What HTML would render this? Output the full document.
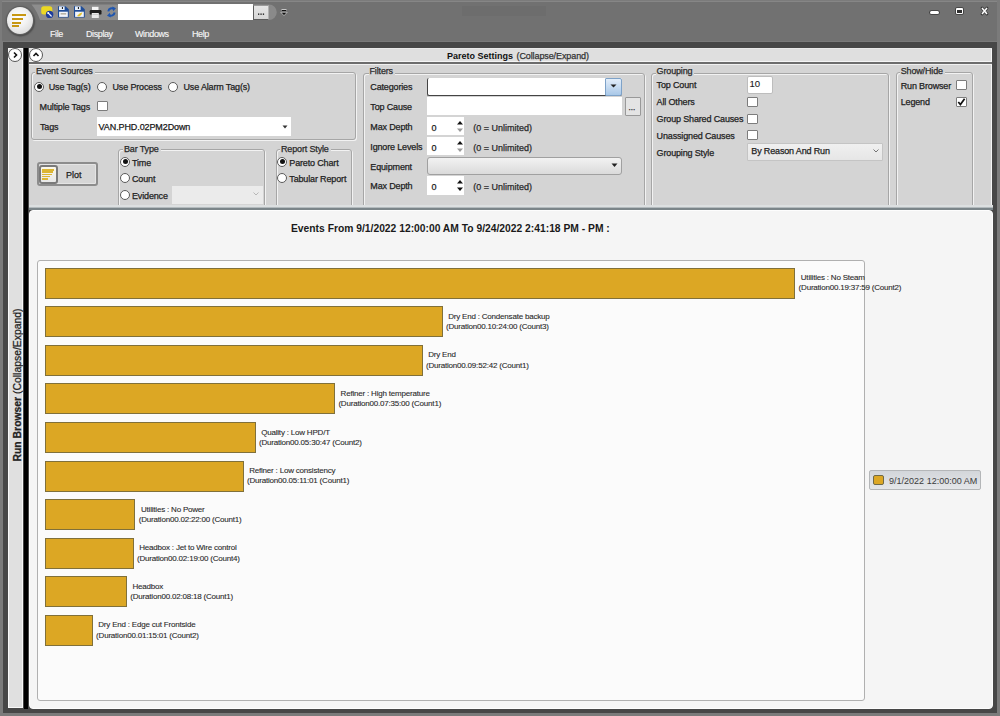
<!DOCTYPE html>
<html><head><meta charset="utf-8"><style>
html,body{margin:0;padding:0;width:1000px;height:716px;overflow:hidden;background:#7b7b7b}
body{position:relative;font-family:"Liberation Sans", sans-serif}
body>div,body>svg{position:absolute}
.t{white-space:nowrap;-webkit-text-stroke:0.25px currentColor}
</style></head><body>
<div style="left:0px;top:0px;width:1000px;height:716px;background:#7b7b7b"></div>
<div style="left:2px;top:1px;width:995px;height:41px;background:#717171;box-shadow:inset 0 1px 0 #868686, inset 0 -1px 0 #7a7a7a"></div>
<div style="left:462px;top:6px;width:84px;height:10px;background:#6d6d6d"></div>
<div style="left:3px;top:42px;width:994px;height:671px;background:#474747"></div>
<div style="left:7px;top:7px;width:26px;height:27px;border-radius:50%;background:radial-gradient(circle at 45% 40%,#ffffff 0%,#f2f2f2 40%,#d0d0d0 100%);box-shadow:0 0 0 1px #606060, 0.5px 1px 1.5px 1.5px #4c4c4c"></div>
<div style="left:12px;top:13.8px;width:14px;height:2.1px;background:#c79712"></div>
<div style="left:12px;top:17.8px;width:11px;height:2.1px;background:#c79712"></div>
<div style="left:12px;top:21.5px;width:9.2px;height:2.1px;background:#c79712"></div>
<div style="left:12px;top:25.4px;width:7px;height:2.1px;background:#c79712"></div>
<svg style="left:0px;top:0px" width="300" height="30"><path d="M31.5 4.5 L262 4.5 L262 20 L40 20 Q37 11 31.5 4.5 Z" fill="#8d8d8d"/><path d="M262 4.5 L269 4.5 A7.75 7.75 0 0 1 269 20 L262 20 Z" fill="#8a8a8a"/></svg>
<div style="left:118px;top:4px;width:135px;height:16px;background:#fff"></div>
<div style="left:253px;top:4.5px;width:16px;height:15.5px;background:linear-gradient(#e6e6e6,#d6d6d6);box-sizing:border-box;border:1px solid #5c5c5c;border-top-color:#9a9a9a;border-right-color:#b0b0b0"></div>
<svg style="left:258px;top:13px" width="7" height="3"><rect x="0" y="0.5" width="1.3" height="1.3" fill="#111"/><rect x="2.4" y="0.5" width="1.3" height="1.3" fill="#111"/><rect x="4.8" y="0.5" width="1.3" height="1.3" fill="#111"/></svg>
<svg style="left:280px;top:8px" width="8" height="9"><rect x="1.5" y="1" width="5" height="1.3" fill="#fff" opacity="0.6"/><rect x="2" y="2" width="4" height="1" fill="#111"/><path d="M0.8 4.3 L7.2 4.3 L4 7.6 Z" fill="#111" stroke="#eee" stroke-width="0.6"/></svg>
<svg style="left:0px;top:0px" width="130" height="25" viewBox="0 0 130 25">
<rect x="41.2" y="6.2" width="11.1" height="8.2" rx="2.5" fill="#ecd823"/>
<circle cx="49.6" cy="14.4" r="3.7" fill="#1e3d9c"/>
<path d="M48.3 13.1 L51.2 16" stroke="#e8f0ff" stroke-width="1.3" stroke-linecap="round"/><circle cx="48.2" cy="13" r="1" fill="#fff"/>
<g id="fl">
<path d="M58 6.2 L65.5 6.2 L68.8 9.3 L68.8 17.6 L58 17.6 Z" fill="#1f4d98"/>
<rect x="59" y="6.4" width="5.6" height="3.6" fill="#e6eef8"/>
<rect x="61.9" y="7" width="1" height="2" fill="#111"/>
<rect x="59.1" y="11.7" width="8.7" height="5.2" fill="#f2f5fa"/>
<rect x="60.6" y="13" width="5.6" height="1.6" fill="#b9b5a8"/>
</g>
<path d="M74 6.2 L81.5 6.2 L84.8 9.3 L84.8 17.6 L74 17.6 Z" fill="#1f4d98"/>
<rect x="75" y="6.4" width="5.6" height="3.6" fill="#e6eef8"/>
<rect x="77.9" y="7" width="1" height="2" fill="#111"/>
<rect x="75.1" y="11.7" width="8.7" height="5.2" fill="#f2f5fa"/>
<path d="M77 16 L79.5 13.5 L82.5 12.2 L81.2 15 L79 16.5 Z" fill="#e2c22c"/>
<rect x="92" y="6.8" width="6.5" height="3.6" fill="#f4f4f4"/>
<rect x="89.7" y="10" width="11.8" height="4.6" rx="1.2" fill="#1e1e1e"/>
<rect x="91.8" y="13" width="7" height="5" fill="#e9e9e9"/>
<rect x="92.5" y="14.2" width="5.6" height="0.6" fill="#bbb"/>
<path d="M108.3 11.3 A3.6 3.6 0 0 1 114 9" fill="none" stroke="#1f56b0" stroke-width="2"/>
<path d="M112.3 6.6 L116 8.2 L113.2 11.2 Z" fill="#1f56b0"/>
<path d="M114.6 12.5 A3.6 3.6 0 0 1 109 15" fill="none" stroke="#1f56b0" stroke-width="2"/>
<path d="M110.8 17.6 L107 15.8 L109.8 12.8 Z" fill="#1f56b0"/>
</svg>
<div style="left:930px;top:10.5px;width:8.5px;height:3px;background:#fff;box-shadow:0 0 0 0.8px #3a3a3a;border-radius:1.5px"></div>
<div style="left:956px;top:7.8px;width:7px;height:6.6px;background:#2e2e2e;box-sizing:border-box;border:1.4px solid #fff;border-top-width:2.4px;box-shadow:0 0 0 0.8px #3a3a3a;border-radius:1px"></div>
<svg style="left:980px;top:6px" width="9" height="10"><path d="M2 2 L7 8 M7 2 L2 8" stroke="#3a3a3a" stroke-width="2.8" stroke-linecap="round"/><path d="M2 2 L7 8 M7 2 L2 8" stroke="#fff" stroke-width="1.5"/></svg>
<div class="t" style="left:50px;top:30px;font-size:9px;line-height:9px;font-weight:normal;color:#f6f6f6;letter-spacing:-0.4px;-webkit-text-stroke:0.15px #f2f2f2">File</div>
<div class="t" style="left:86px;top:30px;font-size:9px;line-height:9px;font-weight:normal;color:#f6f6f6;letter-spacing:-0.4px;-webkit-text-stroke:0.15px #f2f2f2">Display</div>
<div class="t" style="left:135px;top:30px;font-size:9px;line-height:9px;font-weight:normal;color:#f6f6f6;letter-spacing:-0.4px;-webkit-text-stroke:0.15px #f2f2f2">Windows</div>
<div class="t" style="left:192px;top:30px;font-size:9px;line-height:9px;font-weight:normal;color:#f6f6f6;letter-spacing:-0.4px;-webkit-text-stroke:0.15px #f2f2f2">Help</div>
<div style="left:8px;top:48px;width:15px;height:660px;background:#e0e0e0;box-shadow:inset 0 0 0 1px #f8f8f8"></div>
<div style="left:24px;top:48px;width:4px;height:661px;background:#000"></div>
<div style="left:8px;top:48px;width:14px;height:14px;border-radius:50%;background:#fff;box-sizing:border-box;border:1px solid #555"></div>
<svg style="left:8px;top:48px" width="14" height="14"><path d="M6 4.5 L8.5 7 L6 9.5" fill="none" stroke="#111" stroke-width="1.6"/></svg>
<div class="t" style="left:-58.5px;top:380px;width:151px;height:12px;transform:rotate(-90deg);transform-origin:center;font-size:10.4px;line-height:12px;color:#222;white-space:nowrap;text-align:left"><b>Run Browser</b> (Collapse/Expand)</div>
<div style="left:29px;top:48px;width:963px;height:14px;background:#dfdfdf;box-shadow:inset 0 1px 0 #e9e9e9, inset 0 -1px 0 #f4f4f4, inset -1px 0 0 #f8f8f8"></div>
<div style="left:29px;top:62.3px;width:963px;height:1.7px;background:#6c6c6c"></div>
<div style="left:29px;top:48px;width:14px;height:14px;border-radius:50%;background:#fff;box-sizing:border-box;border:1px solid #555"></div>
<svg style="left:29px;top:48px" width="14" height="14"><path d="M4.5 8 L7 5.5 L9.5 8" fill="none" stroke="#111" stroke-width="1.6"/></svg>
<div class="t" style="left:447px;top:52px;font-size:9px;line-height:9px;font-weight:bold;color:#111;letter-spacing:0px;-webkit-text-stroke:0">Pareto Settings</div>
<div class="t" style="left:516.5px;top:52px;font-size:9px;line-height:9px;font-weight:normal;color:#333;letter-spacing:-0.1px;">(Collapse/Expand)</div>
<div style="left:29px;top:64px;width:963px;height:144px;background:#d4d4d4;box-shadow:inset 0 1px 0 #f0f0f0, inset -1px 0 0 #f4f4f4"></div>
<div style="left:31px;top:71.5px;width:325px;height:68px;box-sizing:border-box;border:1px solid #a6a6a6;border-radius:3px;box-shadow:inset 1px 1px 0 #f2f2f2, 1px 1px 0 #f2f2f2"></div>
<div class="t" style="left:35px;top:67.2px;font-size:9px;line-height:9px;font-weight:normal;color:#2a2a2a;letter-spacing:-0.15px;"><span style="background:#d4d4d4;padding:0 2px 0 1px">Event Sources</span></div>
<div style="left:118px;top:148.5px;width:147px;height:59.5px;box-sizing:border-box;border:1px solid #a6a6a6;border-radius:3px;box-shadow:inset 1px 1px 0 #f2f2f2, 1px 1px 0 #f2f2f2"></div>
<div class="t" style="left:123px;top:144.5px;font-size:9px;line-height:9px;font-weight:normal;color:#2a2a2a;letter-spacing:-0.15px;"><span style="background:#d4d4d4;padding:0 2px 0 1px">Bar Type</span></div>
<div style="left:276px;top:149px;width:76px;height:59px;box-sizing:border-box;border:1px solid #a6a6a6;border-radius:3px;box-shadow:inset 1px 1px 0 #f2f2f2, 1px 1px 0 #f2f2f2"></div>
<div class="t" style="left:280px;top:144.5px;font-size:9px;line-height:9px;font-weight:normal;color:#2a2a2a;letter-spacing:-0.15px;"><span style="background:#d4d4d4;padding:0 2px 0 1px">Report Style</span></div>
<div style="left:362.5px;top:72.5px;width:282px;height:135px;box-sizing:border-box;border:1px solid #a6a6a6;border-radius:3px;box-shadow:inset 1px 1px 0 #f2f2f2, 1px 1px 0 #f2f2f2"></div>
<div class="t" style="left:368.5px;top:67.2px;font-size:9px;line-height:9px;font-weight:normal;color:#2a2a2a;letter-spacing:-0.15px;"><span style="background:#d4d4d4;padding:0 2px 0 1px">Filters</span></div>
<div style="left:651px;top:72.5px;width:238px;height:135px;box-sizing:border-box;border:1px solid #a6a6a6;border-radius:3px;box-shadow:inset 1px 1px 0 #f2f2f2, 1px 1px 0 #f2f2f2"></div>
<div class="t" style="left:655.6px;top:67.2px;font-size:9px;line-height:9px;font-weight:normal;color:#2a2a2a;letter-spacing:-0.15px;"><span style="background:#d4d4d4;padding:0 2px 0 1px">Grouping</span></div>
<div style="left:896px;top:72px;width:77px;height:135.5px;box-sizing:border-box;border:1px solid #a6a6a6;border-radius:3px;box-shadow:inset 1px 1px 0 #f2f2f2, 1px 1px 0 #f2f2f2"></div>
<div class="t" style="left:899.7px;top:67.2px;font-size:9px;line-height:9px;font-weight:normal;color:#2a2a2a;letter-spacing:-0.15px;"><span style="background:#d4d4d4;padding:0 2px 0 1px">Show/Hide</span></div>
<div style="left:34px;top:81.5px;width:10px;height:10px;border-radius:50%;background:#fff;box-sizing:border-box;border:1px solid #5a5a5a"></div>
<div style="left:36.5px;top:84px;width:5px;height:5px;border-radius:50%;background:#111"></div>
<div class="t" style="left:48.7px;top:83.2px;font-size:9px;line-height:9px;font-weight:normal;color:#222;letter-spacing:-0.15px;">Use Tag(s)</div>
<div style="left:97px;top:81.5px;width:10px;height:10px;border-radius:50%;background:#fff;box-sizing:border-box;border:1px solid #5a5a5a"></div>
<div class="t" style="left:112.5px;top:83.2px;font-size:9px;line-height:9px;font-weight:normal;color:#222;letter-spacing:-0.15px;">Use Process</div>
<div style="left:168px;top:81.5px;width:10px;height:10px;border-radius:50%;background:#fff;box-sizing:border-box;border:1px solid #5a5a5a"></div>
<div class="t" style="left:183.5px;top:83.2px;font-size:9px;line-height:9px;font-weight:normal;color:#222;letter-spacing:-0.15px;">Use Alarm Tag(s)</div>
<div class="t" style="left:39.6px;top:103px;font-size:9px;line-height:9px;font-weight:normal;color:#222;letter-spacing:-0.15px;">Multiple Tags</div>
<div style="left:97.4px;top:100.8px;width:11px;height:10.5px;background:#fff;box-sizing:border-box;border:1px solid #7c7c7c;border-radius:1px"></div>
<div class="t" style="left:40px;top:123px;font-size:9px;line-height:9px;font-weight:normal;color:#222;letter-spacing:-0.15px;">Tags</div>
<div style="left:97px;top:117px;width:194px;height:18.7px;background:#fff"></div>
<div class="t" style="left:98.6px;top:123px;font-size:9px;line-height:9px;font-weight:normal;color:#1a1a1a;letter-spacing:-0.1px;">VAN.PHD.02PM2Down</div>
<svg style="left:282px;top:125px" width="6" height="4"><path d="M0.5 0.5 L5.5 0.5 L3 3.5 Z" fill="#333"/></svg>
<div style="left:36.5px;top:162px;width:61.5px;height:23.8px;box-sizing:border-box;border:2px solid #8d8d8d;border-radius:3px;background:#d6d6d6;box-shadow:inset 0 0 0 1px #e4e4e4"></div>
<div style="left:39px;top:165px;width:18.5px;height:18.5px;box-sizing:border-box;border:2px solid #7a7a7a;border-radius:3px;background:linear-gradient(#fbf8ea,#e8e8e8)"></div>
<div style="left:41.8px;top:169.0px;width:12px;height:1.6px;background:#dcb634"></div>
<div style="left:41.8px;top:171.3px;width:11px;height:1.6px;background:#dcb634"></div>
<div style="left:41.8px;top:173.6px;width:10px;height:1.6px;background:#dcb634"></div>
<div style="left:41.8px;top:175.9px;width:8.5px;height:1.6px;background:#dcb634"></div>
<div style="left:41.8px;top:178.2px;width:6px;height:1.6px;background:#dcb634"></div>
<div class="t" style="left:66px;top:171px;font-size:9px;line-height:9px;font-weight:normal;color:#222;letter-spacing:0px;">Plot</div>
<div style="left:120px;top:156.7px;width:10px;height:10px;border-radius:50%;background:#fff;box-sizing:border-box;border:1px solid #5a5a5a"></div>
<div style="left:122.5px;top:159.2px;width:5px;height:5px;border-radius:50%;background:#111"></div>
<div class="t" style="left:132px;top:158.6px;font-size:9px;line-height:9px;font-weight:normal;color:#222;letter-spacing:-0.15px;">Time</div>
<div style="left:120px;top:173.4px;width:10px;height:10px;border-radius:50%;background:#fff;box-sizing:border-box;border:1px solid #5a5a5a"></div>
<div class="t" style="left:132px;top:175.3px;font-size:9px;line-height:9px;font-weight:normal;color:#222;letter-spacing:-0.15px;">Count</div>
<div style="left:120px;top:189.9px;width:10px;height:10px;border-radius:50%;background:#fff;box-sizing:border-box;border:1px solid #5a5a5a"></div>
<div class="t" style="left:132px;top:191.8px;font-size:9px;line-height:9px;font-weight:normal;color:#222;letter-spacing:-0.15px;">Evidence</div>
<div style="left:172.2px;top:186px;width:90.6px;height:18px;background:#ebebeb"></div>
<svg style="left:253px;top:192px" width="6" height="4"><path d="M0.5 0.5 L3 3 L5.5 0.5" fill="none" stroke="#aaa" stroke-width="0.8"/></svg>
<div style="left:277px;top:156.8px;width:10px;height:10px;border-radius:50%;background:#fff;box-sizing:border-box;border:1px solid #5a5a5a"></div>
<div style="left:279.5px;top:159.3px;width:5px;height:5px;border-radius:50%;background:#111"></div>
<div class="t" style="left:289.3px;top:158.7px;font-size:9px;line-height:9px;font-weight:normal;color:#222;letter-spacing:-0.15px;">Pareto Chart</div>
<div style="left:277px;top:173.2px;width:10px;height:10px;border-radius:50%;background:#fff;box-sizing:border-box;border:1px solid #5a5a5a"></div>
<div class="t" style="left:289.3px;top:175.1px;font-size:9px;line-height:9px;font-weight:normal;color:#222;letter-spacing:-0.15px;">Tabular Report</div>
<div class="t" style="left:370.3px;top:83px;font-size:9px;line-height:9px;font-weight:normal;color:#222;letter-spacing:-0.15px;">Categories</div>
<div class="t" style="left:370.3px;top:103px;font-size:9px;line-height:9px;font-weight:normal;color:#222;letter-spacing:-0.15px;">Top Cause</div>
<div class="t" style="left:370.3px;top:122.69999999999999px;font-size:9px;line-height:9px;font-weight:normal;color:#222;letter-spacing:-0.15px;">Max Depth</div>
<div class="t" style="left:370.3px;top:142.6px;font-size:9px;line-height:9px;font-weight:normal;color:#222;letter-spacing:-0.15px;">Ignore Levels</div>
<div class="t" style="left:370.3px;top:162.5px;font-size:9px;line-height:9px;font-weight:normal;color:#222;letter-spacing:-0.15px;">Equipment</div>
<div class="t" style="left:370.3px;top:182px;font-size:9px;line-height:9px;font-weight:normal;color:#222;letter-spacing:-0.15px;">Max Depth</div>
<div style="left:427.3px;top:77.8px;width:194.4px;height:17.9px;background:#fff;box-sizing:border-box;border-left:1.5px solid #444;border-bottom:1.5px solid #444;border-radius:2px"></div>
<div style="left:605.4px;top:77.8px;width:16.3px;height:17.9px;background:linear-gradient(#e3eefa,#a9c8e8);box-sizing:border-box;border:1px solid #7ea2c8;border-radius:1px 2px 2px 1px"></div>
<svg style="left:610px;top:84px" width="7" height="4"><path d="M0.5 0.5 L6.5 0.5 L3.5 3.5 Z" fill="#222"/></svg>
<div style="left:427.3px;top:97px;width:194.4px;height:18px;background:#fff"></div>
<div style="left:625.4px;top:97.4px;width:15.3px;height:18.2px;background:#e4e4e4;box-sizing:border-box;border:1px solid #999;border-radius:1px"></div>
<div class="t" style="left:628.5px;top:104px;font-size:8px;line-height:8px;color:#222">...</div>
<div style="left:427.3px;top:116.6px;width:36.5px;height:18.5px;background:#fff"></div>
<div class="t" style="left:431.5px;top:123.6px;font-size:9px;line-height:9px;font-weight:normal;color:#222;letter-spacing:0px;">0</div>
<svg style="left:456px;top:119.6px" width="8" height="13"><path d="M1 4.5 L4 1 L7 4.5 Z" fill="#111"/><path d="M1 8.5 L4 12 L7 8.5 Z" fill="#999"/></svg>
<div class="t" style="left:473.2px;top:123.6px;font-size:9px;line-height:9px;font-weight:normal;color:#2a2a2a;letter-spacing:0px;">(0 = Unlimited)</div>
<div style="left:427.3px;top:136.8px;width:36.5px;height:18.5px;background:#fff"></div>
<div class="t" style="left:431.5px;top:143.8px;font-size:9px;line-height:9px;font-weight:normal;color:#222;letter-spacing:0px;">0</div>
<svg style="left:456px;top:139.8px" width="8" height="13"><path d="M1 4.5 L4 1 L7 4.5 Z" fill="#111"/><path d="M1 8.5 L4 12 L7 8.5 Z" fill="#999"/></svg>
<div class="t" style="left:473.2px;top:143.8px;font-size:9px;line-height:9px;font-weight:normal;color:#2a2a2a;letter-spacing:0px;">(0 = Unlimited)</div>
<div style="left:427.3px;top:156.9px;width:194.4px;height:17.7px;background:linear-gradient(#f2f2f2,#dadada);box-sizing:border-box;border:1px solid #a0a0a0;border-radius:3px"></div>
<svg style="left:611px;top:163px" width="7" height="5"><path d="M0.5 0.5 L6.5 0.5 L3.5 4 Z" fill="#222"/></svg>
<div style="left:427.3px;top:176.3px;width:36.5px;height:18.5px;background:#fff"></div>
<div class="t" style="left:431.5px;top:183.3px;font-size:9px;line-height:9px;font-weight:normal;color:#222;letter-spacing:0px;">0</div>
<svg style="left:456px;top:179.3px" width="8" height="13"><path d="M1 4.5 L4 1 L7 4.5 Z" fill="#111"/><path d="M1 8.5 L4 12 L7 8.5 Z" fill="#111"/></svg>
<div class="t" style="left:473.2px;top:183.3px;font-size:9px;line-height:9px;font-weight:normal;color:#2a2a2a;letter-spacing:0px;">(0 = Unlimited)</div>
<div class="t" style="left:656.6px;top:81.4px;font-size:9px;line-height:9px;font-weight:normal;color:#222;letter-spacing:-0.15px;">Top Count</div>
<div class="t" style="left:656.6px;top:98.4px;font-size:9px;line-height:9px;font-weight:normal;color:#222;letter-spacing:-0.15px;">All Others</div>
<div class="t" style="left:656.6px;top:115.4px;font-size:9px;line-height:9px;font-weight:normal;color:#222;letter-spacing:-0.15px;">Group Shared Causes</div>
<div class="t" style="left:656.6px;top:131.5px;font-size:9px;line-height:9px;font-weight:normal;color:#222;letter-spacing:-0.15px;">Unassigned Causes</div>
<div class="t" style="left:656.6px;top:148.5px;font-size:9px;line-height:9px;font-weight:normal;color:#222;letter-spacing:-0.15px;">Grouping Style</div>
<div style="left:746.7px;top:75.6px;width:26.7px;height:18.4px;background:#fff;box-sizing:border-box;border:1.2px solid #bdbdbd;border-radius:2px"></div>
<div class="t" style="left:749.4px;top:79.2px;font-size:9.6px;line-height:9.6px;font-weight:normal;color:#1a1a1a;letter-spacing:-0.1px;-webkit-text-stroke:0.1px #1a1a1a">10</div>
<div style="left:747px;top:96.9px;width:11px;height:10px;background:#fff;box-sizing:border-box;border:1px solid #7c7c7c;border-radius:1px"></div>
<div style="left:747px;top:113.9px;width:11px;height:10px;background:#fff;box-sizing:border-box;border:1px solid #7c7c7c;border-radius:1px"></div>
<div style="left:747px;top:130px;width:11px;height:10px;background:#fff;box-sizing:border-box;border:1px solid #7c7c7c;border-radius:1px"></div>
<div style="left:746.7px;top:142.8px;width:136.8px;height:17.8px;background:linear-gradient(#f0f0f0,#e6e6e6);box-sizing:border-box;border:1px solid #c4c4c4;border-radius:1px"></div>
<div class="t" style="left:751.3px;top:147px;font-size:9px;line-height:9px;font-weight:normal;color:#222;letter-spacing:-0.15px;">By Reason And Run</div>
<svg style="left:873px;top:149px" width="6" height="4"><path d="M0.5 0.5 L3 3 L5.5 0.5" fill="none" stroke="#666" stroke-width="0.9"/></svg>
<div class="t" style="left:900.7px;top:81.8px;font-size:9px;line-height:9px;font-weight:normal;color:#222;letter-spacing:-0.15px;">Run Browser</div>
<div style="left:955.8px;top:80.4px;width:11px;height:9.5px;background:#fff;box-sizing:border-box;border:1px solid #7c7c7c;border-radius:1px"></div>
<div class="t" style="left:900.7px;top:98px;font-size:9px;line-height:9px;font-weight:normal;color:#222;letter-spacing:-0.15px;">Legend</div>
<div style="left:955.8px;top:97.2px;width:11px;height:9.5px;background:#fff;box-sizing:border-box;border:1px solid #7c7c7c;border-radius:1px"></div>
<svg style="left:955.8px;top:97.2px" width="11" height="9.5"><path d="M2.3 5 L4.4 7.6 L8.6 1.8" fill="none" stroke="#111" stroke-width="1.7"/></svg>
<div style="left:29px;top:205px;width:964px;height:2px;background:#dcdfe0"></div>
<div style="left:29px;top:207px;width:964px;height:1px;background:#b3babd"></div>
<div style="left:29px;top:208px;width:964px;height:1.7px;background:#7b8589"></div>
<div style="left:28.4px;top:209.7px;width:564.6px;height:499px"></div>
<div style="left:28.5px;top:209.7px;width:964.5px;height:499px;background:#f5f5f5;box-sizing:border-box;border:1px solid #fdfdfd;border-radius:4px"></div>
<div class="t" style="left:291px;top:223.5px;font-size:10.3px;line-height:10.3px;font-weight:bold;color:#1a1a1a;letter-spacing:0px;-webkit-text-stroke:0">Events From 9/1/2022 12:00:00 AM To 9/24/2022 2:41:18 PM - PM :</div>
<div style="left:36.5px;top:259.8px;width:828px;height:441px;background:#fbfbfb;box-sizing:border-box;border:1px solid #b0b0b0;border-radius:3px"></div>
<div style="left:44.9px;top:267.6px;width:750.3px;height:31px;background:#dca724;box-sizing:border-box;border:1px solid #80703a;border-bottom-width:1.4px"></div>
<div class="t" style="left:800.8px;top:274.2px;font-size:8px;line-height:8px;font-weight:normal;color:#2a2a2a;letter-spacing:-0.2px;-webkit-text-stroke:0.1px #2a2a2a">Utilities : No Steam</div>
<div class="t" style="left:798.6px;top:284.4px;font-size:8px;line-height:8px;font-weight:normal;color:#2a2a2a;letter-spacing:-0.2px;-webkit-text-stroke:0.1px #2a2a2a">(Duration00.19:37:59 (Count2)</div>
<div style="left:44.9px;top:306.2px;width:397.7px;height:31px;background:#dca724;box-sizing:border-box;border:1px solid #80703a;border-bottom-width:1.4px"></div>
<div class="t" style="left:448.2px;top:312.8px;font-size:8px;line-height:8px;font-weight:normal;color:#2a2a2a;letter-spacing:-0.2px;-webkit-text-stroke:0.1px #2a2a2a">Dry End : Condensate backup</div>
<div class="t" style="left:446.0px;top:323.0px;font-size:8px;line-height:8px;font-weight:normal;color:#2a2a2a;letter-spacing:-0.2px;-webkit-text-stroke:0.1px #2a2a2a">(Duration00.10:24:00 (Count3)</div>
<div style="left:44.9px;top:344.8px;width:377.7px;height:31px;background:#dca724;box-sizing:border-box;border:1px solid #80703a;border-bottom-width:1.4px"></div>
<div class="t" style="left:428.2px;top:351.4px;font-size:8px;line-height:8px;font-weight:normal;color:#2a2a2a;letter-spacing:-0.2px;-webkit-text-stroke:0.1px #2a2a2a">Dry End</div>
<div class="t" style="left:426.0px;top:361.6px;font-size:8px;line-height:8px;font-weight:normal;color:#2a2a2a;letter-spacing:-0.2px;-webkit-text-stroke:0.1px #2a2a2a">(Duration00.09:52:42 (Count1)</div>
<div style="left:44.9px;top:383.3px;width:290.1px;height:31px;background:#dca724;box-sizing:border-box;border:1px solid #80703a;border-bottom-width:1.4px"></div>
<div class="t" style="left:340.6px;top:389.9px;font-size:8px;line-height:8px;font-weight:normal;color:#2a2a2a;letter-spacing:-0.2px;-webkit-text-stroke:0.1px #2a2a2a">Refiner : High temperature</div>
<div class="t" style="left:338.4px;top:400.1px;font-size:8px;line-height:8px;font-weight:normal;color:#2a2a2a;letter-spacing:-0.2px;-webkit-text-stroke:0.1px #2a2a2a">(Duration00.07:35:00 (Count1)</div>
<div style="left:44.9px;top:421.9px;width:210.7px;height:31px;background:#dca724;box-sizing:border-box;border:1px solid #80703a;border-bottom-width:1.4px"></div>
<div class="t" style="left:261.2px;top:428.5px;font-size:8px;line-height:8px;font-weight:normal;color:#2a2a2a;letter-spacing:-0.2px;-webkit-text-stroke:0.1px #2a2a2a">Quality : Low HPD/T</div>
<div class="t" style="left:259.0px;top:438.7px;font-size:8px;line-height:8px;font-weight:normal;color:#2a2a2a;letter-spacing:-0.2px;-webkit-text-stroke:0.1px #2a2a2a">(Duration00.05:30:47 (Count2)</div>
<div style="left:44.9px;top:460.5px;width:198.7px;height:31px;background:#dca724;box-sizing:border-box;border:1px solid #80703a;border-bottom-width:1.4px"></div>
<div class="t" style="left:249.2px;top:467.1px;font-size:8px;line-height:8px;font-weight:normal;color:#2a2a2a;letter-spacing:-0.2px;-webkit-text-stroke:0.1px #2a2a2a">Refiner : Low consistency</div>
<div class="t" style="left:247.0px;top:477.3px;font-size:8px;line-height:8px;font-weight:normal;color:#2a2a2a;letter-spacing:-0.2px;-webkit-text-stroke:0.1px #2a2a2a">(Duration00.05:11:01 (Count1)</div>
<div style="left:44.9px;top:499.1px;width:90.5px;height:31px;background:#dca724;box-sizing:border-box;border:1px solid #80703a;border-bottom-width:1.4px"></div>
<div class="t" style="left:141.0px;top:505.7px;font-size:8px;line-height:8px;font-weight:normal;color:#2a2a2a;letter-spacing:-0.2px;-webkit-text-stroke:0.1px #2a2a2a">Utilities : No Power</div>
<div class="t" style="left:138.8px;top:515.9px;font-size:8px;line-height:8px;font-weight:normal;color:#2a2a2a;letter-spacing:-0.2px;-webkit-text-stroke:0.1px #2a2a2a">(Duration00.02:22:00 (Count1)</div>
<div style="left:44.9px;top:537.7px;width:88.7px;height:31px;background:#dca724;box-sizing:border-box;border:1px solid #80703a;border-bottom-width:1.4px"></div>
<div class="t" style="left:139.2px;top:544.3px;font-size:8px;line-height:8px;font-weight:normal;color:#2a2a2a;letter-spacing:-0.2px;-webkit-text-stroke:0.1px #2a2a2a">Headbox : Jet to Wire control</div>
<div class="t" style="left:137.0px;top:554.5px;font-size:8px;line-height:8px;font-weight:normal;color:#2a2a2a;letter-spacing:-0.2px;-webkit-text-stroke:0.1px #2a2a2a">(Duration00.02:19:00 (Count4)</div>
<div style="left:44.9px;top:576.2px;width:82.0px;height:31px;background:#dca724;box-sizing:border-box;border:1px solid #80703a;border-bottom-width:1.4px"></div>
<div class="t" style="left:132.5px;top:582.8px;font-size:8px;line-height:8px;font-weight:normal;color:#2a2a2a;letter-spacing:-0.2px;-webkit-text-stroke:0.1px #2a2a2a">Headbox</div>
<div class="t" style="left:130.3px;top:593.0px;font-size:8px;line-height:8px;font-weight:normal;color:#2a2a2a;letter-spacing:-0.2px;-webkit-text-stroke:0.1px #2a2a2a">(Duration00.02:08:18 (Count1)</div>
<div style="left:44.9px;top:614.8px;width:47.8px;height:31px;background:#dca724;box-sizing:border-box;border:1px solid #80703a;border-bottom-width:1.4px"></div>
<div class="t" style="left:98.3px;top:621.4px;font-size:8px;line-height:8px;font-weight:normal;color:#2a2a2a;letter-spacing:-0.2px;-webkit-text-stroke:0.1px #2a2a2a">Dry End : Edge cut Frontside</div>
<div class="t" style="left:96.1px;top:631.6px;font-size:8px;line-height:8px;font-weight:normal;color:#2a2a2a;letter-spacing:-0.2px;-webkit-text-stroke:0.1px #2a2a2a">(Duration00.01:15:01 (Count2)</div>
<div style="left:868.7px;top:470.1px;width:112px;height:19.6px;background:linear-gradient(#d3d6da,#e4e6e9);box-sizing:border-box;border:1px solid #b4b6b8;border-radius:2px"></div>
<div style="left:873.3px;top:474.7px;width:10.5px;height:10.5px;background:#dca724;box-sizing:border-box;border:1.2px solid #6f6a48;border-radius:2px"></div>
<div class="t" style="left:889.1px;top:476.8px;font-size:9px;line-height:9px;font-weight:normal;color:#3c3c3c;letter-spacing:0px;-webkit-text-stroke:0">9/1/2022 12:00:00 AM</div>
</body></html>
